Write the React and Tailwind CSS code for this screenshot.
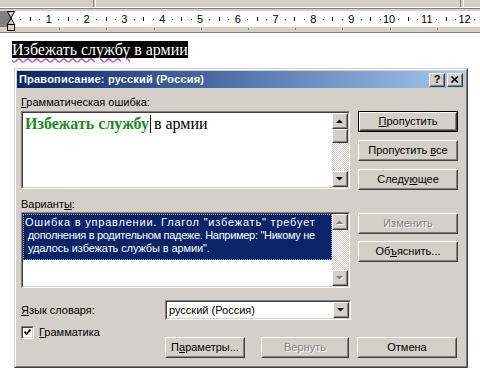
import React from "react";

const ui = "font-['Liberation_Sans',sans-serif] text-[11px] leading-[13px]";

function Ruler() {
  const origin = 11;
  const cm = 37.8;
  const nums = [1, 2, 3, 4, 5, 6, 7, 8, 9, 10, 11, 12];
  const marks = [];
  for (let i = 0; i < 13; i++) {
    const x = origin + i * cm;
    marks.push(<rect key={"q1" + i} x={Math.round(x + cm / 4)} y={19} width={1} height={1} fill="#000" />);
    marks.push(<rect key={"h" + i} x={Math.round(x + cm / 2)} y={17} width={1} height={4} fill="#000" />);
    marks.push(<rect key={"q3" + i} x={Math.round(x + (cm * 3) / 4)} y={19} width={1} height={1} fill="#000" />);
  }
  const tabs = [];
  for (let k = 1; k < 10; k++) {
    tabs.push(<rect key={"t" + k} x={Math.round(12 + k * 47.2)} y={28} width={1} height={2} fill="#808080" />);
  }
  return (
    <svg width="480" height="34" className="block">
      <rect x="0" y="0" width="480" height="8" fill="#d4d0c8" />
      <rect x="93" y="0" width="1" height="7" fill="#808080" />
      <rect x="95" y="0" width="1" height="7" fill="#ffffff" />
      <rect x="460" y="0" width="1" height="7" fill="#808080" />
      <rect x="463" y="0" width="1" height="7" fill="#ffffff" />
      <rect x="0" y="7" width="480" height="1" fill="#ffffff" />
      <rect x="0" y="8" width="480" height="1" fill="#808080" />
      <rect x="0" y="9" width="480" height="24" fill="#d4d0c8" />
      <rect x="0" y="11" width="11" height="16" fill="#808080" />
      <rect x="11" y="11" width="469" height="16" fill="#ffffff" />
      {marks}
      {nums.map((n) => (
        <text key={n} x={origin + n * cm} y={23} textAnchor="middle" fontSize="11" fontFamily="'Liberation Sans',sans-serif" fill="#000">
          {n}
        </text>
      ))}
      {tabs}
      <polygon points="7.5,11.5 14.5,11.5 11,18 14.5,24.5 7.5,24.5 11,18" fill="#d4d0c8" stroke="#000" strokeWidth="1" />
      <rect x="7.5" y="24.5" width="7" height="6" fill="#d4d0c8" stroke="#000" strokeWidth="1" />
      <rect x="0" y="32" width="480" height="1" fill="#808080" />
    </svg>
  );
}

function Raised({ className = "", children }) {
  return (
    <div className={`border border-t-white border-l-white border-b-[#404040] border-r-[#404040] bg-[#d4d0c8] ${className}`}>
      <div className="h-full w-full border border-t-[#d4d0c8] border-l-[#d4d0c8] border-b-[#808080] border-r-[#808080] flex items-center justify-center">
        {children}
      </div>
    </div>
  );
}

function Sunken({ className = "", children }) {
  return (
    <div className={`border border-t-[#808080] border-l-[#808080] border-b-white border-r-white ${className}`}>
      <div className="h-full w-full border border-t-[#404040] border-l-[#404040] border-b-[#d4d0c8] border-r-[#d4d0c8] bg-white flex overflow-hidden">
        {children}
      </div>
    </div>
  );
}

function Arrow({ up, disabled }) {
  const pts = up ? "0,4 7,4 3.5,0.5" : "0,0 7,0 3.5,3.5";
  return (
    <svg width="8" height="5" className="block">
      {disabled && <polygon points={pts} transform="translate(1,1)" fill="#ffffff" />}
      <polygon points={pts} fill={disabled ? "#808080" : "#000"} />
    </svg>
  );
}

function Scrollbar({ disabled }) {
  return (
    <div className="w-[16px] h-full flex flex-col shrink-0">
      <Raised className="h-[16px] w-[16px] shrink-0">
        <Arrow up disabled={disabled} />
      </Raised>
      {!disabled && <Raised className="h-[14px] w-[16px] shrink-0" />}
      <div className="flex-1 bg-[repeating-conic-gradient(#d4d0c8_0%_25%,#ffffff_0%_50%)] bg-[length:2px_2px]" />
      <Raised className="h-[16px] w-[16px] shrink-0">
        <Arrow disabled={disabled} />
      </Raised>
    </div>
  );
}

function Button({ children, def, disabled, w = "w-[100px]" }) {
  const label = disabled ? (
    <span className="text-[#808080] [text-shadow:1px_1px_0_#ffffff]">{children}</span>
  ) : (
    <span className="text-black">{children}</span>
  );
  if (def) {
    return (
      <div className={`border border-black h-[21px] ${w}`}>
        <Raised className="h-full w-full">{label}</Raised>
      </div>
    );
  }
  return <Raised className={`h-[21px] ${w}`}>{label}</Raised>;
}

function Dialog() {
  return (
    <div className={`ml-[14px] mt-[10px] w-[454px] border border-t-[#d4d0c8] border-l-[#d4d0c8] border-b-[#404040] border-r-[#404040] ${ui}`}>
      <div className="border border-t-white border-l-white border-b-[#808080] border-r-[#808080] bg-[#d4d0c8] p-[1px]">
        <div className="h-[17px] bg-gradient-to-r from-[#0a246a] to-[#a6caf0] flex items-center pl-[2px] pr-[2px]">
          <span className="font-bold text-white flex-1 tracking-[0.2px]">Правописание: русский (Россия)</span>
          <Raised className="h-[14px] w-[16px]">
            <span className="font-bold text-black text-[11px] leading-none">?</span>
          </Raised>
          <Raised className="h-[14px] w-[16px] ml-[2px]">
            <svg width="8" height="7" className="block">
              <path d="M0.5 0.5 L7 6.5 M7 0.5 L0.5 6.5" stroke="#000" strokeWidth="1.6" />
            </svg>
          </Raised>
        </div>

        <div className="pl-[4px] pr-[5px] pt-[8px] pb-[7px] text-black">
          <div className="h-[13px]">
            <span className="underline">Г</span>рамматическая ошибка:
          </div>
          <div className="flex gap-[8px] mt-[2px]">
            <Sunken className="w-[329px] h-[78px]">
              <div className="flex-1 pl-[2px] pt-[2px] font-['Liberation_Serif',serif] text-[16px] leading-[18px]">
                <span className="font-bold text-[#1c8a1c]">Избежать службу</span>
                <span className="inline-block w-[1px] h-[18px] bg-black align-[-4px] mx-[1px]" />
                <span className="ml-[2px]">в армии</span>
              </div>
              <Scrollbar />
            </Sunken>
            <div className="flex flex-col gap-[8px]">
              <Button def>
                <span className="underline">П</span>ропустить
              </Button>
              <Button>
                Пропустить <span className="underline">в</span>се
              </Button>
              <Button>
                Следу<span className="underline">ю</span>щее
              </Button>
            </div>
          </div>

          <div className="h-[13px] mt-[8px]">
            Вариант<span className="underline">ы</span>:
          </div>
          <div className="flex gap-[8px] mt-[1px]">
            <Sunken className="w-[329px] h-[76px]">
              <div className="flex-1 min-w-0">
                <div className="bg-[#0a246a] text-white border border-dotted border-[#9aa4c0] pt-[1px] pb-[4px] pl-[1px] whitespace-pre overflow-hidden">
                  <div className="tracking-[0.8px]">Ошибка в управлении. Глагол "избежать" требует</div>
                  <div className="tracking-[-0.3px]"> дополнения в родительном падеже. Например: "Никому не</div>
                  <div className="tracking-[-0.1px]"> удалось избежать службы в армии".</div>
                </div>
              </div>
              <Scrollbar disabled />
            </Sunken>
            <div className="flex flex-col gap-[7px] pt-[1px]">
              <Button disabled>Изменить</Button>
              <Button>
                Об<span className="underline">ъ</span>яснить...
              </Button>
            </div>
          </div>

          <div className="flex items-center mt-[12px] h-[20px]">
            <div className="w-[144px]">
              <span className="underline">Я</span>зык словаря:
            </div>
            <Sunken className="w-[186px] h-[20px]">
              <div className="flex-1 flex items-center pl-[2px]">русский (Россия)</div>
              <Raised className="w-[16px] h-full">
                <Arrow />
              </Raised>
            </Sunken>
          </div>

          <div className="flex mt-[6px]">
            <div className="w-[144px] flex items-center gap-[5px] h-[13px]">
              <Sunken className="w-[13px] h-[13px]">
                <svg width="9" height="9" className="block">
                  <path d="M1.5 3.5 L3.5 6 L7.5 1.5" stroke="#000" strokeWidth="1.8" fill="none" />
                </svg>
              </Sunken>
              <span>
                <span className="underline">Г</span>рамматика
              </span>
            </div>
            <div className="flex mt-[11px]">
              <Button w="w-[80px]">
                П<span className="underline">а</span>раметры...
              </Button>
              <div className="ml-[16px]">
                <Button disabled w="w-[88px]">Вернуть</Button>
              </div>
              <div className="ml-[8px]">
                <Button>Отмена</Button>
              </div>
            </div>
          </div>
        </div>
      </div>
    </div>
  );
}

export default function App() {
  return (
    <div className="w-[480px] h-[379px] bg-white overflow-hidden">
      <Ruler />
      <div className="pt-[7px] pl-[12px] h-[24px]">
        <div className="w-fit bg-black text-white font-['Liberation_Serif',serif] text-[16px] leading-[17px] h-[17px]">
          <span className="underline decoration-wavy decoration-[#c060c0] underline-offset-2">Избежать службу</span> в армии
        </div>
      </div>
      <Dialog />
    </div>
  );
}
